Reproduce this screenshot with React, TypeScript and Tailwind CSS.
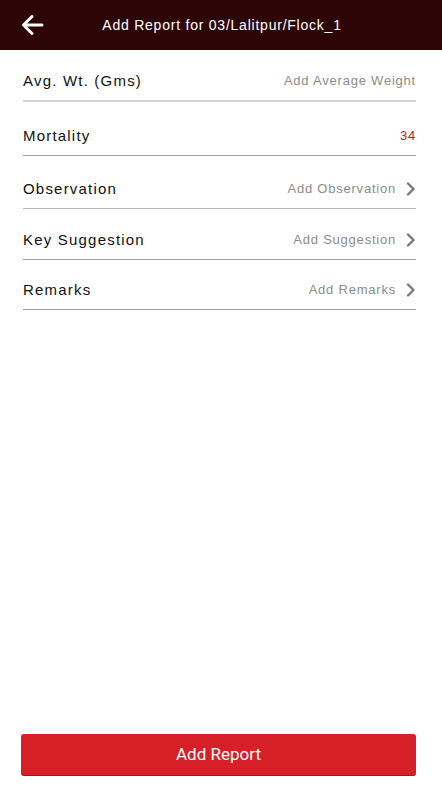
import React from 'react';

interface RowProps {
  label: string;
  value: string;
  valueClass?: string;
  chevron?: boolean;
  rowClass: string;
}

const Chevron = () => (
  <svg className="ml-[10px] w-[10px] h-[14px]" viewBox="0 0 10 14" fill="none">
    <path d="M2 1.5L7.5 7L2 12.5" stroke="#7a7a7a" strokeWidth={2.4} strokeLinecap="round" strokeLinejoin="round" />
  </svg>
);

const ReportRow: React.FC<RowProps> = ({ label, value, valueClass, chevron, rowClass }) => (
  <div className={`flex items-end justify-between pb-[9px] ${rowClass}`}>
    <span className="text-[15px] leading-[20px] tracking-[0.08em] text-[#111]">{label}</span>
    <div className="flex items-center">
      <span className={`text-[13px] leading-[20px] tracking-[0.06em] ${valueClass ?? 'text-[#8c8c8c]'}`}>
        {value}
      </span>
      {chevron && <Chevron />}
    </div>
  </div>
);

export default function App() {
  return (
    <div
      className="w-[442px] h-[800px] bg-white flex flex-col"
      style={{ fontFamily: '"Liberation Sans", Arial, sans-serif' }}
    >
      <div className="h-[50px] bg-[#2e0505] flex items-center relative">
        <svg className="absolute left-[21px] top-[14px] w-[23px] h-[22px]" viewBox="0 0 23 22" fill="none">
          <path d="M21 11H3M11 2.5L2.5 11L11 19.5" stroke="white" strokeWidth={3} strokeLinecap="round" strokeLinejoin="round" />
        </svg>
        <h1 className="flex-1 text-center text-white text-[14px] tracking-[0.055em] pl-[2px]">
          Add Report for 03/Lalitpur/Flock_1
        </h1>
      </div>

      <div className="px-[23px] pr-[26px] flex flex-col">
        <ReportRow
          label="Avg. Wt. (Gms)"
          value="Add Average Weight"
          rowClass="h-[52px] border-b-2 border-[#d4d4d4]"
        />
        <ReportRow
          label="Mortality"
          value="34"
          valueClass="text-[#be141c]"
          rowClass="h-[54px] border-b border-[#9c9c9c]"
        />
        <ReportRow
          label="Observation"
          value="Add Observation"
          chevron
          rowClass="h-[53px] border-b border-[#b4b4b4]"
        />
        <ReportRow
          label="Key Suggestion"
          value="Add Suggestion"
          chevron
          rowClass="h-[51px] border-b border-[#9c9c9c]"
        />
        <ReportRow
          label="Remarks"
          value="Add Remarks"
          chevron
          rowClass="h-[50px] border-b border-[#9c9c9c]"
        />
      </div>

      <div className="flex-1" />

      <div className="px-[21px] pb-[24px]">
        <button
          className="w-[395px] h-[42px] rounded-[3px] bg-[#d61f27] text-white text-[17px] border-b border-[#a8141a]"
          style={{ fontFamily: 'Roboto, "Liberation Sans", sans-serif' }}
        >
          Add Report
        </button>
      </div>
    </div>
  );
}
